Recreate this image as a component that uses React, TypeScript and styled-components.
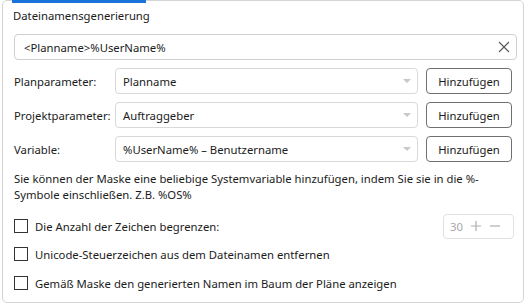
import React from "react";
import styled, { createGlobalStyle } from "styled-components";

const Global = createGlobalStyle`
  html, body { margin: 0; padding: 0; background: #ffffff; }
  body { font-family: "Segoe UI", "Noto Sans", "Open Sans", sans-serif; font-size: 11.3px; color: #1b1b1b; }
  * { box-sizing: border-box; }
`;

const Panel = styled.div`
  position: relative;
  margin-left: 2px;
  width: 522px;
  height: 303px;
  border: 1px solid #d4d4d4;
  border-radius: 5px;
  padding: 5px 6px 0 10px;
  display: flex;
  flex-direction: column;
`;

const Accent = styled.div`
  position: absolute;
  top: -1px;
  left: 9px;
  width: 134px;
  height: 3px;
  background: #1a73d9;
`;

const Title = styled.div`
  height: 20px;
  line-height: 20px;
  margin-bottom: 8px;
`;

const InputBox = styled.div`
  height: 26px;
  border: 1px solid #d0d0d0;
  border-radius: 4px;
  display: flex;
  align-items: center;
  padding: 0 6px 0 9px;
  margin-left: 1px;
`;

const InputText = styled.span`
  flex: 1;
`;

const ClearIcon = styled.svg`
  width: 12px;
  height: 12px;
`;

const Rows = styled.div`
  display: flex;
  flex-direction: column;
  gap: 8px;
  margin-top: 8px;
`;

const Row = styled.div`
  display: flex;
  align-items: center;
  height: 26px;
`;

const Label = styled.div`
  width: 102px;
  padding-left: 1px;
  white-space: nowrap;
`;

const Select = styled.div`
  width: 303px;
  height: 26px;
  border: 1px solid #d8d8d8;
  border-radius: 4px;
  display: flex;
  align-items: center;
  padding: 0 6px 0 7px;
`;

const SelectText = styled.span`
  flex: 1;
`;

const Arrow = styled.span`
  width: 0;
  height: 0;
  border-left: 4px solid transparent;
  border-right: 4px solid transparent;
  border-top: 4px solid #c8c8c8;
`;

const Button = styled.button`
  margin-left: 8px;
  width: 86px;
  height: 26px;
  border: 1px solid #707070;
  border-radius: 4px;
  background: #ffffff;
  font: inherit;
  color: #1b1b1b;
  padding: 0;
`;

const Hint = styled.p`
  margin: 9px 0 0 1px;
  line-height: 16px;
`;

const CheckRow = styled.div<{ $h: number }>`
  display: flex;
  align-items: center;
  height: ${(p) => p.$h}px;
  padding-left: 1px;
`;

const Box = styled.span`
  width: 14px;
  height: 14px;
  border: 1px solid #333333;
  margin-right: 7px;
  flex-shrink: 0;
`;

const CheckLabel = styled.span`
  flex: 1;
`;

const Stepper = styled.div`
  width: 71px;
  height: 25px;
  border: 1px solid #e2e2e2;
  border-radius: 4px;
  display: flex;
  align-items: center;
  padding-left: 6px;
  gap: 7px;
  color: #a8a8a8;
  margin-right: 3px;
`;

const StepIcon = styled.svg`
  width: 12px;
  height: 12px;
`;

const Checks = styled.div`
  display: flex;
  flex-direction: column;
  margin-top: 10px;
`;

export default function App() {
  return (
    <>
      <Global />
      <Panel>
        <Accent />
        <Title>Dateinamensgenerierung</Title>
        <InputBox>
          <InputText>&lt;Planname&gt;%UserName%</InputText>
          <ClearIcon viewBox="0 0 12 12">
            <path d="M1 1 L11 11 M11 1 L1 11" stroke="#555" strokeWidth="1.1" fill="none" />
          </ClearIcon>
        </InputBox>
        <Rows>
          <Row>
            <Label>Planparameter:</Label>
            <Select>
              <SelectText>Planname</SelectText>
              <Arrow />
            </Select>
            <Button>Hinzufügen</Button>
          </Row>
          <Row>
            <Label>Projektparameter:</Label>
            <Select>
              <SelectText>Auftraggeber</SelectText>
              <Arrow />
            </Select>
            <Button>Hinzufügen</Button>
          </Row>
          <Row>
            <Label>Variable:</Label>
            <Select>
              <SelectText>%UserName% – Benutzername</SelectText>
              <Arrow />
            </Select>
            <Button>Hinzufügen</Button>
          </Row>
        </Rows>
        <Hint>
          Sie können der Maske eine beliebige Systemvariable hinzufügen, indem Sie sie in die %-
          <br />
          Symbole einschließen. Z.B. %OS%
        </Hint>
        <Checks>
          <CheckRow $h={26}>
            <Box />
            <CheckLabel>Die Anzahl der Zeichen begrenzen:</CheckLabel>
            <Stepper>
              <span>30</span>
              <StepIcon viewBox="0 0 12 12">
                <path d="M6 1 V11 M1 6 H11" stroke="#b0b0b0" strokeWidth="1.2" />
              </StepIcon>
              <StepIcon viewBox="0 0 12 12">
                <path d="M1 6 H11" stroke="#b0b0b0" strokeWidth="1.2" />
              </StepIcon>
            </Stepper>
          </CheckRow>
          <CheckRow $h={30}>
            <Box />
            <CheckLabel>Unicode-Steuerzeichen aus dem Dateinamen entfernen</CheckLabel>
          </CheckRow>
          <CheckRow $h={28}>
            <Box />
            <CheckLabel>Gemäß Maske den generierten Namen im Baum der Pläne anzeigen</CheckLabel>
          </CheckRow>
        </Checks>
      </Panel>
    </>
  );
}
